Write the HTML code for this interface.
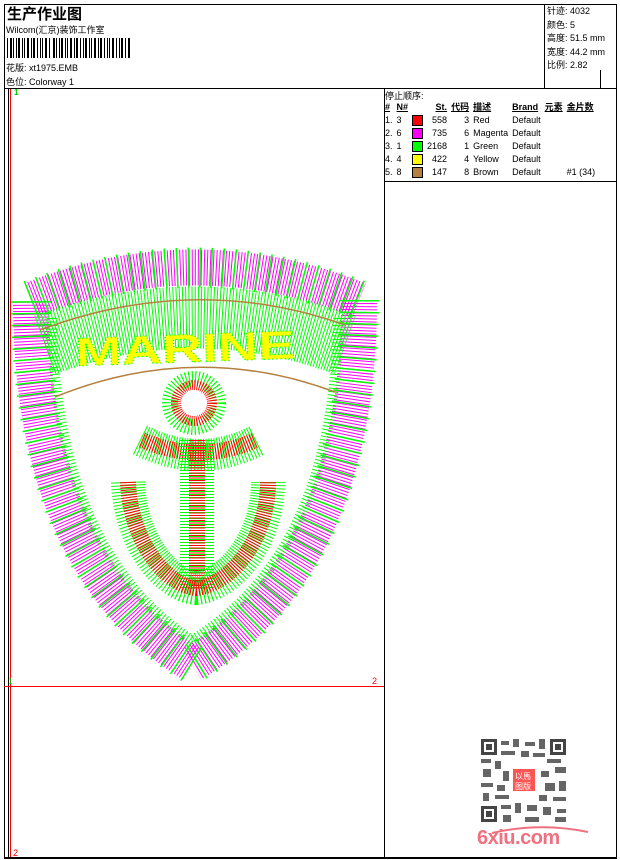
<!DOCTYPE html>
<html><head><meta charset="utf-8"><style>
body{margin:0;width:620px;height:860px;background:#fff;position:relative;overflow:hidden;font-family:"Liberation Sans","Noto Sans CJK SC",sans-serif;font-size:9px;color:#000}
.a{position:absolute;white-space:nowrap}
.ln{position:absolute;background:#000}
table{border-collapse:collapse;font-size:9px}
td{padding:0 2px;height:13px;line-height:13px}
.sw{display:inline-block;width:9px;height:9px;border:1px solid #000;vertical-align:middle}
</style></head><body>
<div class="ln" style="left:4px;top:4px;width:613px;height:1px"></div>
<div class="ln" style="left:4px;top:857px;width:613px;height:2px"></div>
<div class="ln" style="left:4px;top:4px;width:1px;height:854px"></div>
<div class="ln" style="left:616px;top:4px;width:1px;height:854px"></div>
<div class="ln" style="left:4px;top:88px;width:613px;height:1px"></div>
<div class="ln" style="left:544px;top:4px;width:1px;height:84px"></div>
<div class="ln" style="left:600px;top:70px;width:1px;height:18px"></div>
<div class="ln" style="left:384px;top:88px;width:1px;height:770px"></div>
<div class="ln" style="left:384px;top:181px;width:233px;height:1px"></div>
<div class="ln" style="left:8px;top:89px;width:1px;height:768px"></div>
<div style="position:absolute;left:10px;top:89px;width:1px;height:768px;background:#f00"></div>
<div style="position:absolute;left:4px;top:686px;width:380px;height:1px;background:#f00"></div>
<div class="a" style="left:14px;top:88px;color:#0c0;font-weight:bold;font-size:8px">1</div>
<div class="a" style="left:8px;top:677px;color:#0c0;font-size:8px">1</div>
<div class="a" style="left:372px;top:676px;color:#f00;font-size:9px">2</div>
<div class="a" style="left:13px;top:848px;color:#f00;font-size:9px">2</div>
<div class="a" style="left:7px;top:3px;font-size:15px;font-weight:bold">生产作业图</div>
<div class="a" style="left:6px;top:23px">Wilcom(汇京)装饰工作室</div>
<svg class="a" style="left:7px;top:38px" width="125" height="20"><g fill="#000">
<rect x="0" y="0" width="1" height="20"/><rect x="3" y="0" width="2" height="20"/><rect x="6" y="0" width="1" height="20"/><rect x="9" y="0" width="1" height="20"/><rect x="11" y="0" width="2" height="20"/><rect x="15" y="0" width="1" height="20"/><rect x="17" y="0" width="1" height="20"/><rect x="20" y="0" width="2" height="20"/><rect x="24" y="0" width="1" height="20"/><rect x="26" y="0" width="2" height="20"/><rect x="30" y="0" width="1" height="20"/><rect x="33" y="0" width="1" height="20"/><rect x="35" y="0" width="1" height="20"/><rect x="38" y="0" width="2" height="20"/><rect x="42" y="0" width="1" height="20"/><rect x="46" y="0" width="2" height="20"/><rect x="49" y="0" width="1" height="20"/><rect x="52" y="0" width="1" height="20"/><rect x="54" y="0" width="2" height="20"/><rect x="58" y="0" width="1" height="20"/><rect x="60" y="0" width="1" height="20"/><rect x="63" y="0" width="2" height="20"/><rect x="67" y="0" width="1" height="20"/><rect x="69" y="0" width="2" height="20"/><rect x="73" y="0" width="1" height="20"/><rect x="76" y="0" width="1" height="20"/><rect x="78" y="0" width="2" height="20"/><rect x="82" y="0" width="1" height="20"/><rect x="84" y="0" width="1" height="20"/><rect x="87" y="0" width="2" height="20"/><rect x="91" y="0" width="1" height="20"/><rect x="93" y="0" width="2" height="20"/><rect x="97" y="0" width="1" height="20"/><rect x="100" y="0" width="1" height="20"/><rect x="102" y="0" width="1" height="20"/><rect x="105" y="0" width="2" height="20"/><rect x="109" y="0" width="1" height="20"/><rect x="112" y="0" width="1" height="20"/><rect x="114" y="0" width="2" height="20"/><rect x="118" y="0" width="1" height="20"/><rect x="121" y="0" width="2" height="20"/></g></svg>
<div class="a" style="left:6px;top:61px">花版: xt1975.EMB</div>
<div class="a" style="left:6px;top:75px">色位: Colorway 1</div>
<div class="a" style="left:547px;top:5px;line-height:13.5px">针迹: 4032<br>颜色: 5<br>高度: 51.5 mm<br>宽度: 44.2 mm<br>比例: 2.82</div>
<div class="a" style="left:385px;top:89px">停止顺序:</div>
<table class="a" style="left:383px;top:101px">
<tr style="font-weight:bold;text-decoration:underline"><td>#</td><td>N#</td><td></td><td style="text-align:right">St.</td><td>代码</td><td>描述</td><td>Brand</td><td>元素</td><td>金片数</td></tr>
<tr><td>1.</td><td>3</td><td><span class="sw" style="background:#f00"></span></td><td style="text-align:right">558</td><td style="text-align:right">3</td><td>Red</td><td>Default</td><td></td><td></td></tr>
<tr><td>2.</td><td>6</td><td><span class="sw" style="background:#f0f"></span></td><td style="text-align:right">735</td><td style="text-align:right">6</td><td>Magenta</td><td>Default</td><td></td><td></td></tr>
<tr><td>3.</td><td>1</td><td><span class="sw" style="background:#0f0"></span></td><td style="text-align:right">2168</td><td style="text-align:right">1</td><td>Green</td><td>Default</td><td></td><td></td></tr>
<tr><td>4.</td><td>4</td><td><span class="sw" style="background:#ff0"></span></td><td style="text-align:right">422</td><td style="text-align:right">4</td><td>Yellow</td><td>Default</td><td></td><td></td></tr>
<tr><td>5.</td><td>8</td><td><span class="sw" style="background:#b5803f"></span></td><td style="text-align:right">147</td><td style="text-align:right">8</td><td>Brown</td><td>Default</td><td></td><td style="text-align:right">#1 (34)</td></tr>
</table>
<svg class="a" style="left:0;top:0" width="390" height="690">
<g fill="none">
<path d="M31 300 Q195 235 359 300 M359 300 C359 480 300 600 192 664 M192 664 C88 600 31 480 31 300" stroke="#f0f" stroke-width="36" stroke-dasharray="1 2"/>
<path d="M31 300 Q195 235 359 300 M359 300 C359 480 300 600 192 664 M192 664 C88 600 31 480 31 300" stroke="#0f0" stroke-width="40" stroke-dasharray="1.5 10"/>
<path d="M52 318 C54 470 100 580 192 640 C290 580 336 470 338 318" stroke="#0f0" stroke-width="10" stroke-dasharray="1 2.5"/>
<path d="M45 345 Q195 290 345 345" stroke="#0f0" stroke-width="62" stroke-dasharray="1 2"/>
<path d="M40 330 Q195 272 345 325" stroke="#b5803f" stroke-width="1.5"/>
<path d="M55 397 Q195 340 335 392" stroke="#b5803f" stroke-width="1.5"/>
<text x="75" y="362" font-family="Liberation Sans" font-weight="bold" font-size="40" fill="#ff0" textLength="220" lengthAdjust="spacingAndGlyphs" stroke="#0f0" stroke-width="1" stroke-dasharray="1 2" transform="rotate(-2 190 340)">MARINE</text>
<circle cx="194" cy="403" r="24" stroke="#0f0" stroke-width="16" stroke-dasharray="1 2"/>
<circle cx="194" cy="403" r="18" stroke="#f00" stroke-width="10" stroke-dasharray="1 1.5"/>
<path d="M140 440 Q200 470 258 440" stroke="#0f0" stroke-width="32" stroke-dasharray="1 2"/>
<path d="M142 440 Q200 465 256 440" stroke="#f00" stroke-width="16" stroke-dasharray="1 1.5"/>
<path d="M197 440 L197 590" stroke="#0f0" stroke-width="34" stroke-dasharray="1 2"/>
<path d="M197 440 L197 590" stroke="#f00" stroke-width="16" stroke-dasharray="1 1.5"/>
<path d="M128 482 C130 540 165 585 196 588 C230 585 268 540 268 482" stroke="#0f0" stroke-width="34" stroke-dasharray="1 2"/>
<path d="M128 482 C130 540 165 585 196 588 C230 585 268 540 268 482" stroke="#f00" stroke-width="16" stroke-dasharray="1 1.5"/>
</g></svg>
<svg class="a" style="left:481px;top:739px" width="85" height="83">
<rect width="85" height="83" fill="#fff"/>
<g fill="#444">
<rect x="0" y="0" width="16" height="16"/><rect x="69" y="0" width="16" height="16"/><rect x="0" y="67" width="16" height="16"/>
</g>
<g fill="#fff"><rect x="3" y="3" width="10" height="10"/><rect x="72" y="3" width="10" height="10"/><rect x="3" y="70" width="10" height="10"/></g>
<g fill="#444"><rect x="5" y="5" width="6" height="6"/><rect x="74" y="5" width="6" height="6"/><rect x="5" y="72" width="6" height="6"/></g>
<g fill="#555" opacity="0.9">
<rect x="20" y="2" width="8" height="4"/><rect x="32" y="0" width="6" height="8"/><rect x="44" y="3" width="10" height="4"/><rect x="58" y="0" width="6" height="10"/>
<rect x="20" y="12" width="14" height="4"/><rect x="40" y="12" width="8" height="6"/><rect x="52" y="14" width="12" height="4"/>
<rect x="0" y="20" width="10" height="4"/><rect x="14" y="22" width="6" height="8"/><rect x="66" y="20" width="14" height="4"/><rect x="74" y="28" width="11" height="6"/>
<rect x="2" y="30" width="8" height="8"/><rect x="22" y="32" width="6" height="10"/><rect x="60" y="32" width="8" height="6"/>
<rect x="0" y="44" width="12" height="4"/><rect x="16" y="46" width="8" height="6"/><rect x="64" y="44" width="10" height="8"/><rect x="78" y="42" width="7" height="10"/>
<rect x="2" y="54" width="6" height="8"/><rect x="14" y="56" width="14" height="4"/><rect x="58" y="56" width="8" height="6"/><rect x="72" y="58" width="13" height="4"/>
<rect x="20" y="66" width="10" height="4"/><rect x="34" y="64" width="6" height="10"/><rect x="46" y="66" width="10" height="6"/><rect x="62" y="68" width="8" height="8"/><rect x="76" y="70" width="9" height="4"/>
<rect x="22" y="76" width="8" height="7"/><rect x="44" y="78" width="14" height="5"/><rect x="74" y="78" width="11" height="5"/>
</g>
<rect x="32" y="30" width="22" height="22" fill="#f55"/>
<text x="34" y="40" font-size="8" fill="#fff" font-family="Noto Sans CJK SC,sans-serif">以馬</text>
<text x="34" y="50" font-size="8" fill="#fff" font-family="Noto Sans CJK SC,sans-serif">图版</text>
</svg>
<div class="a" style="left:477px;top:827px;font-size:20px;font-weight:bold;color:#f07080;letter-spacing:-0.5px">6xiu.com</div>
<svg class="a" style="left:490px;top:824px" width="100" height="10"><path d="M2 9 Q50 -2 98 8" stroke="#f07080" stroke-width="2" fill="none"/></svg>
</body></html>
